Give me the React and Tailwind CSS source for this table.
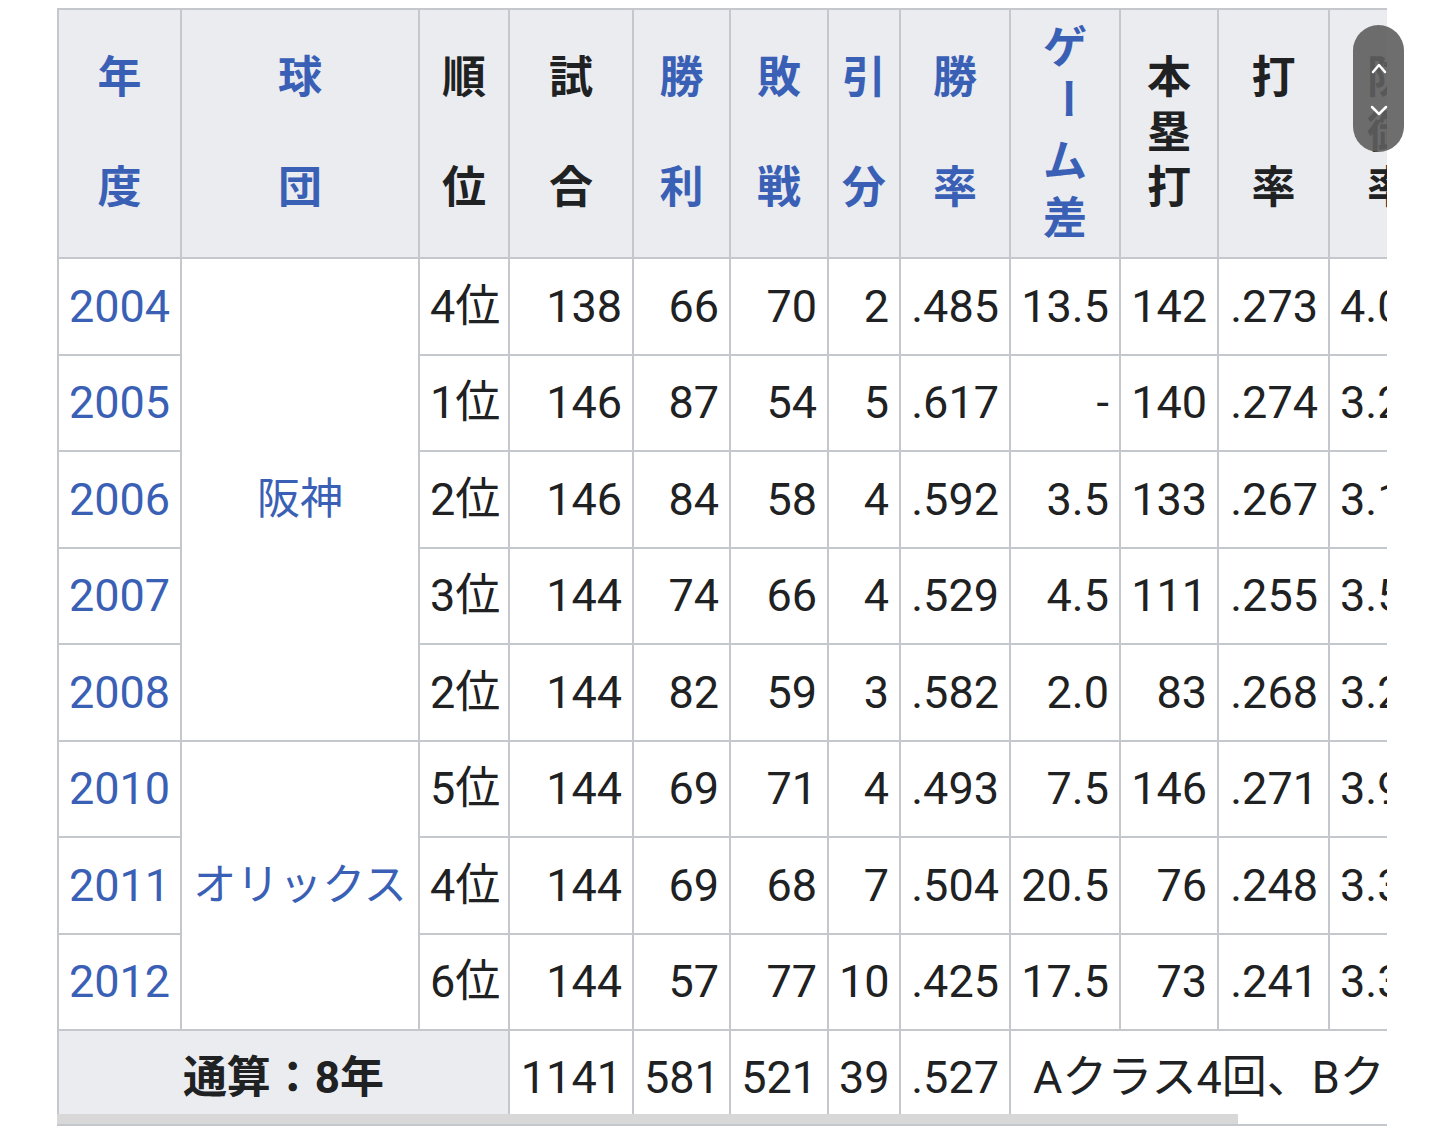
import React from 'react';

const FONT = { fontFamily: 'Roboto, "Noto Sans CJK JP", sans-serif' };

// header columns: each char on its own line, '' is a blank line
const headers = [
  { lines: ['年', '', '度'], link: true },
  { lines: ['球', '', '団'], link: true },
  { lines: ['順', '', '位'] },
  { lines: ['試', '', '合'] },
  { lines: ['勝', '', '利'], link: true },
  { lines: ['敗', '', '戦'], link: true },
  { lines: ['引', '', '分'], link: true },
  { lines: ['勝', '', '率'], link: true },
  { lines: ['ゲ', 'ー', 'ム', '差'], link: true, tall: true },
  { lines: ['本', '塁', '打'] },
  { lines: ['打', '', '率'] },
  { lines: ['防', '御', '率'] },
];

const rows = [
  { year: '2004', team: '阪神', span: 5, rank: '4位', g: '138', w: '66', l: '70', d: '2', pct: '.485', gb: '13.5', hr: '142', avg: '.273', era: '4.08' },
  { year: '2005', rank: '1位', g: '146', w: '87', l: '54', d: '5', pct: '.617', gb: '-', hr: '140', avg: '.274', era: '3.24' },
  { year: '2006', rank: '2位', g: '146', w: '84', l: '58', d: '4', pct: '.592', gb: '3.5', hr: '133', avg: '.267', era: '3.13' },
  { year: '2007', rank: '3位', g: '144', w: '74', l: '66', d: '4', pct: '.529', gb: '4.5', hr: '111', avg: '.255', era: '3.56' },
  { year: '2008', rank: '2位', g: '144', w: '82', l: '59', d: '3', pct: '.582', gb: '2.0', hr: '83', avg: '.268', era: '3.29' },
  { year: '2010', team: 'オリックス', span: 3, rank: '5位', g: '144', w: '69', l: '71', d: '4', pct: '.493', gb: '7.5', hr: '146', avg: '.271', era: '3.97' },
  { year: '2011', rank: '4位', g: '144', w: '69', l: '68', d: '7', pct: '.504', gb: '20.5', hr: '76', avg: '.248', era: '3.33' },
  { year: '2012', rank: '6位', g: '144', w: '57', l: '77', d: '10', pct: '.425', gb: '17.5', hr: '73', avg: '.241', era: '3.34' },
];

const widths = ['w-[123px]', 'w-[238px]', 'w-[90px]', 'w-[124px]', 'w-[97px]', 'w-[98px]', 'w-[72px]', 'w-[110px]', 'w-[110px]', 'w-[98px]', 'w-[111px]', 'w-[120px]'];

const cell = 'border-2 border-[#c4c7cc] px-[10px] align-middle whitespace-nowrap';
const num = cell + ' text-right';

export default function App() {
  return (
    <div className="relative w-[1440px] h-[1131px] bg-white overflow-hidden text-[#202122]" style={FONT}>
      <div className="relative ml-[56px] mt-[7px] w-[1331px] overflow-hidden p-px">
        <table className="table-fixed border-collapse w-[1391px] text-[45px] leading-none">
          <colgroup>
            {widths.map((w, i) => <col key={i} className={w} />)}
          </colgroup>
          <thead>
            <tr className="h-[249px] bg-[#eaecf0]">
              {headers.map((h, i) => (
                <th key={i} className={'border-2 border-[#c4c7cc] p-0 align-middle font-bold text-[44px] ' + (h.link ? 'text-[#3a60b6]' : 'text-[#202122]')}>
                  <div className="flex flex-col items-center">
                    {h.lines.map((c, j) => (
                      <div key={j} className={h.tall ? 'h-[57px] leading-[57px]' : 'h-[55px] leading-[55px]'}>
                        {c === 'ー' ? (
                          <span className="inline-block [writing-mode:vertical-rl]">ー</span>
                        ) : c === '' ? '\u00a0' : c}
                      </div>
                    ))}
                  </div>
                </th>
              ))}
            </tr>
          </thead>
          <tbody>
            {rows.map(r => (
              <tr key={r.year} className="h-[96.5px]">
                <td className={cell + ' text-left text-[#3a60b6]'}>{r.year}</td>
                {r.team && (
                  <td rowSpan={r.span} className={cell + ' text-center text-[#3a60b6] px-0 text-[43px]'}>{r.team}</td>
                )}
                <td className={cell + ' text-left'}>{r.rank}</td>
                <td className={num}>{r.g}</td>
                <td className={num}>{r.w}</td>
                <td className={num}>{r.l}</td>
                <td className={num}>{r.d}</td>
                <td className={num}>{r.pct}</td>
                <td className={num}>{r.gb}</td>
                <td className={num}>{r.hr}</td>
                <td className={num}>{r.avg}</td>
                <td className={cell + ' text-left'}>{r.era}</td>
              </tr>
            ))}
            <tr className="h-[95px]">
              <th colSpan={3} className="border-2 border-[#c4c7cc] bg-[#eaecf0] font-bold text-[44px] align-middle">通算：8年</th>
              <td className={num}>1141</td>
              <td className={num}>581</td>
              <td className={num}>521</td>
              <td className={num}>39</td>
              <td className={num}>.527</td>
              <td colSpan={4} className={cell + ' text-left pl-[22px]'}>Aクラス4回、Bクラス4回</td>
            </tr>
          </tbody>
        </table>
        {/* horizontal scroll indicator */}
        <div className="absolute left-px bottom-[3px] w-[1181px] h-[10px] bg-[#d8d8d8]" />
      </div>

      {/* vertical scroll thumb */}
      <div className="absolute left-[1353px] top-[25px] w-[51px] h-[127px] rounded-full bg-[#5e5e5e]/90 flex flex-col items-center justify-center gap-[30px]">
        <svg width="18" height="12" viewBox="0 0 18 12" fill="none" stroke="white" strokeWidth="2.5" strokeLinecap="round" strokeLinejoin="round">
          <path d="M3 10 L9 3 L15 10" />
        </svg>
        <svg width="20" height="12" viewBox="0 0 20 12" fill="none" stroke="white" strokeWidth="2.5" strokeLinecap="round" strokeLinejoin="round">
          <path d="M3 3 L10 10 L17 3" />
        </svg>
      </div>
    </div>
  );
}
